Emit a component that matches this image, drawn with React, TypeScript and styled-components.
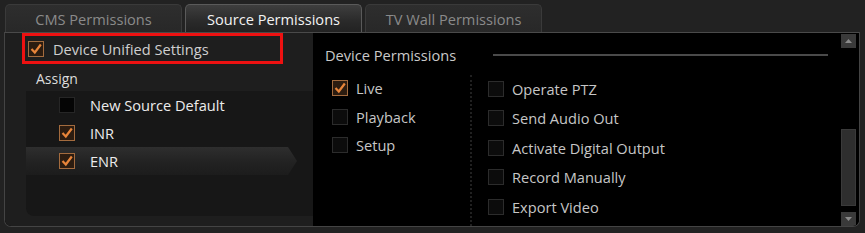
import React from "react";
import styled, { createGlobalStyle } from "styled-components";

const Global = createGlobalStyle`
  html, body { margin: 0; padding: 0; background: #222222; }
  body { font-family: "Open Sans", "Noto Sans", sans-serif; }
  * { box-sizing: border-box; }
`;

const Page = styled.div`
  width: 865px;
  height: 233px;
  padding: 4px 5px 0 4px;
  background: #222222;
  display: flex;
  flex-direction: column;
`;

const TabBar = styled.div`
  display: flex;
  gap: 3px;
  height: 28px;
  padding-left: 1px;
`;

const Tab = styled.div<{ $active?: boolean }>`
  width: 177px;
  height: 28px;
  border-radius: 5px 5px 0 0;
  border: 1px solid ${(p) => (p.$active ? "#5a5a5a" : "#3a3a3a")};
  border-bottom: none;
  background: ${(p) =>
    p.$active
      ? "linear-gradient(#3e3e3e, #2a2a2a 60%, #222 100%)"
      : "linear-gradient(#2e2e2e, #282828)"};
  color: ${(p) => (p.$active ? "#f2f2f2" : "#8a8a8a")};
  font-size: 14.6px;
  display: flex;
  align-items: center;
  justify-content: center;
  padding-top: 1px;
`;

const Panel = styled.div`
  height: 195px;
  border: 1px solid #444;
  border-top: 1px solid #4a4a4a;
  border-radius: 0 0 7px 7px;
  display: flex;
  overflow: hidden;
  background: #000;
`;

const LeftPane = styled.div`
  width: 308px;
  background: #1e1e1e;
  display: flex;
  flex-direction: column;
`;

const UnifiedRow = styled.div`
  margin: 0 0 0 17px;
  width: 261px;
  height: 31px;
  border: 3px solid #ee1111;
  display: flex;
  align-items: center;
  gap: 9px;
  padding-left: 3px;
  color: #cfcfcf;
  font-size: 14.6px;
`;

const AssignLabel = styled.div`
  margin: 4px 0 0 31px;
  height: 22px;
  color: #dcdcdc;
  font-size: 14px;
  line-height: 22px;
`;

const ListBox = styled.div`
  flex: 1;
  margin: 1px 0 10px 21px;
  background: #171717;
  border-radius: 0 0 0 8px;
  display: flex;
  flex-direction: column;
`;

const ListItem = styled.div<{ $selected?: boolean }>`
  height: 28px;
  width: 271px;
  display: flex;
  align-items: center;
  gap: 15px;
  padding-left: 33px;
  color: #ececec;
  font-size: 14.6px;
  background: ${(p) =>
    p.$selected ? "linear-gradient(#2e2e2e, #222 55%, #1c1c1c)" : "transparent"};
  clip-path: ${(p) =>
    p.$selected
      ? "polygon(0 0, 262px 0, 271px 50%, 262px 100%, 0 100%)"
      : "none"};
`;

const RightPane = styled.div`
  flex: 1;
  display: flex;
  flex-direction: column;
  background: #000;
`;

const Header = styled.div`
  display: flex;
  align-items: center;
  height: 18px;
  margin-top: 13px;
  padding: 0 12px;
  color: #c9c9c9;
  font-size: 14.6px;
`;

const HeaderLine = styled.div`
  width: 335px;
  height: 2px;
  margin-left: auto;
  background: #4a4a4a;
`;

const Body = styled.div`
  flex: 1;
  display: flex;
  margin-top: 10px;
`;

const Column = styled.div<{ $width?: number; $pad: number }>`
  ${(p) => (p.$width ? `width: ${p.$width}px;` : "flex: 1;")}
  padding-left: ${(p) => p.$pad}px;
  display: flex;
  flex-direction: column;
`;

const Separator = styled.div`
  width: 0;
  border-left: 2px dotted #202020;
  margin-top: 1px;
`;

const PermRow = styled.div<{ $h: number }>`
  height: ${(p) => p.$h}px;
  display: flex;
  align-items: center;
  gap: 8px;
  color: #c6c6c6;
  font-size: 14.6px;
`;

const Box = styled.span<{ $checked?: boolean; $tone?: "dark" | "dim" }>`
  width: 16px;
  height: 16px;
  flex: none;
  display: inline-flex;
  align-items: center;
  justify-content: center;
  border: 1px solid
    ${(p) => (p.$checked ? "#a36b3e" : p.$tone === "dim" ? "#2c2c2c" : "#262626")};
  background: ${(p) =>
    p.$checked ? "#2c1c10" : p.$tone === "dim" ? "#0c0c0c" : "#050505"};
`;

const ScrollCol = styled.div`
  width: 19px;
  display: flex;
  flex-direction: column;
  padding: 1px 3px 0 1px;
  background: #000;
`;

const ScrollBtn = styled.div`
  height: 14px;
  width: 15px;
  background: #3a3a3a;
  display: flex;
  align-items: center;
  justify-content: center;
`;

const Track = styled.div`
  flex: 1;
  display: flex;
  flex-direction: column;
  justify-content: flex-end;
  padding-bottom: 6px;
`;

const Thumb = styled.div`
  height: 77px;
  width: 15px;
  background: #2e2e2e;
  border: 1px solid #3a3a3a;
`;

const Check = ({ checked, tone }: { checked?: boolean; tone?: "dark" | "dim" }) => (
  <Box $checked={checked} $tone={tone}>
    {checked && (
      <svg width="12" height="12" viewBox="0 0 12 12">
        <polyline
          points="1.5,6 4.8,9.5 10.8,1.5"
          fill="none"
          stroke="#e8853a"
          strokeWidth="2.2"
          strokeLinejoin="miter"
        />
      </svg>
    )}
  </Box>
);

const Arrow = ({ up }: { up?: boolean }) => (
  <svg width="7" height="4" viewBox="0 0 7 4">
    <polygon points={up ? "0,4 7,4 3.5,0" : "0,0 7,0 3.5,4"} fill="#8a8a8a" />
  </svg>
);

const leftPerms = [
  { label: "Live", checked: true },
  { label: "Playback" },
  { label: "Setup" },
];
const rightPerms = [
  "Operate PTZ",
  "Send Audio Out",
  "Activate Digital Output",
  "Record Manually",
  "Export Video",
];

export default function App() {
  return (
    <Page>
      <Global />
      <TabBar>
        <Tab>CMS Permissions</Tab>
        <Tab $active>Source Permissions</Tab>
        <Tab>TV Wall Permissions</Tab>
      </TabBar>
      <Panel>
        <LeftPane>
          <UnifiedRow>
            <Check checked />
            Device Unified Settings
          </UnifiedRow>
          <AssignLabel>Assign</AssignLabel>
          <ListBox>
            <ListItem>
              <Check tone="dark" />
              New Source Default
            </ListItem>
            <ListItem>
              <Check checked />
              INR
            </ListItem>
            <ListItem $selected>
              <Check checked />
              ENR
            </ListItem>
          </ListBox>
        </LeftPane>
        <RightPane>
          <Header>
            Device Permissions
            <HeaderLine />
          </Header>
          <Body>
            <Column $width={157} $pad={19}>
              {leftPerms.map((p) => (
                <PermRow key={p.label} $h={28.5}>
                  <Check checked={p.checked} tone="dim" />
                  {p.label}
                </PermRow>
              ))}
            </Column>
            <Separator />
            <Column $pad={16}>
              {rightPerms.map((l) => (
                <PermRow key={l} $h={29.5}>
                  <Check tone="dim" />
                  {l}
                </PermRow>
              ))}
            </Column>
          </Body>
        </RightPane>
        <ScrollCol>
          <ScrollBtn>
            <Arrow up />
          </ScrollBtn>
          <Track>
            <Thumb />
          </Track>
          <ScrollBtn>
            <Arrow />
          </ScrollBtn>
        </ScrollCol>
      </Panel>
    </Page>
  );
}
